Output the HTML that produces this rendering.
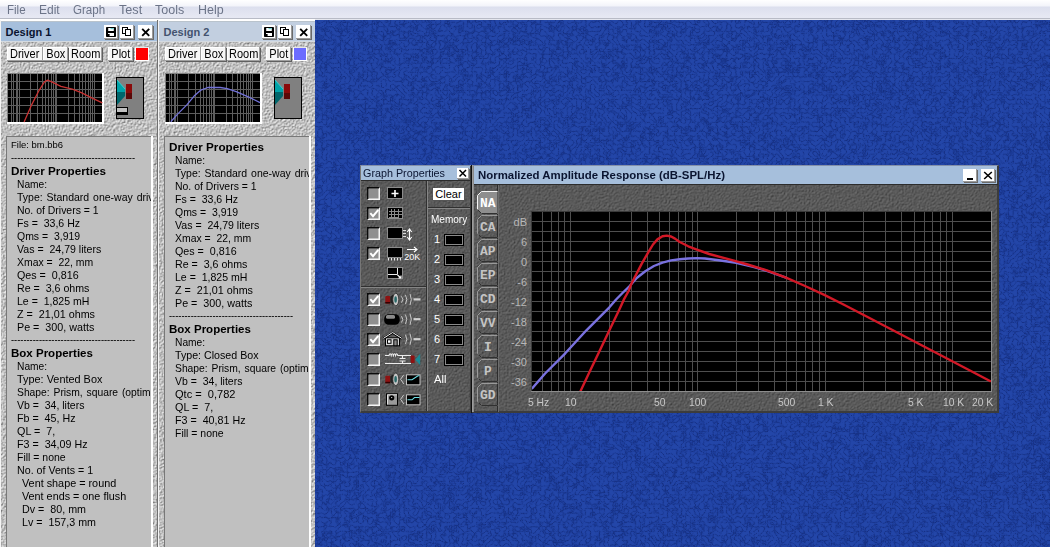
<!DOCTYPE html>
<html><head><meta charset="utf-8"><title>BassBox</title>
<style>
*{box-sizing:border-box;margin:0;padding:0}
html,body{width:1050px;height:547px;overflow:hidden;background:#1f3f9c;font-family:"Liberation Sans",sans-serif;}
.abs{position:absolute}
#root{position:absolute;left:0;top:0;width:1050px;height:547px;overflow:hidden}
.menu{position:absolute;left:0;top:0;width:1050px;height:18px;background:linear-gradient(#ffffff 0px,#f3f4fa 6px,#dcdfee 7px,#e6e8f3 17px)}
.menu span{position:absolute;top:2px;font-size:12px;line-height:16px;color:#6c7488;white-space:nowrap;transform-origin:0 0}
.tb{position:absolute;height:19px;font-weight:bold;font-size:11px;line-height:19px;white-space:nowrap;overflow:hidden}
.tb span{position:absolute;transform-origin:0 0}
.btn{position:absolute;background:#fff;border-right:1px solid #808080;border-bottom:1px solid #808080;font-size:11px;color:#000;text-align:center;white-space:nowrap}
.btn2{position:absolute;background:#fff;box-shadow:inset -1px -1px 0 #9a9a9a, 1px 1px 0 #6a6a6a}
.txt{position:absolute;background:#c0c0c0;overflow:hidden}
.ln{position:absolute;height:13px;line-height:13px;font-size:11px;color:#000;white-space:pre;transform-origin:0 0;}
.b{font-weight:bold;font-size:11.5px}
.s{font-size:9.33px}
.w{color:#fff}
</style></head><body><div id="root">

<svg class="abs" style="left:0;top:0" width="1050" height="547">
<defs>
<filter id="fblue" x="0" y="0" width="100%" height="100%" color-interpolation-filters="sRGB">
<feTurbulence type="turbulence" baseFrequency="0.22" numOctaves="2" seed="7"/>
<feColorMatrix type="matrix" values="1 0 0 0 0  1 0 0 0 0  1 0 0 0 0  0 0 0 0 1"/>
<feComponentTransfer>
<feFuncR type="table" tableValues="0.085 0.105 0.125 0.135 0.14 0.14 0.14 0.14 0.14 0.14"/>
<feFuncG type="table" tableValues="0.185 0.225 0.255 0.27 0.275 0.275 0.275 0.275 0.275 0.275"/>
<feFuncB type="table" tableValues="0.51 0.58 0.63 0.655 0.66 0.66 0.66 0.66 0.66 0.66"/>
</feComponentTransfer>
</filter>
<filter id="fgrey" x="0" y="0" width="100%" height="100%" color-interpolation-filters="sRGB">
<feTurbulence type="fractalNoise" baseFrequency="0.7" numOctaves="2" seed="11" result="n"/>
<feDiffuseLighting in="n" surfaceScale="1.1" diffuseConstant="1" lighting-color="#ffffff"><feDistantLight azimuth="225" elevation="49"/></feDiffuseLighting>
</filter>
<filter id="fdark" x="0" y="0" width="100%" height="100%" color-interpolation-filters="sRGB">
<feTurbulence type="fractalNoise" baseFrequency="0.6" numOctaves="2" seed="5" result="n"/>
<feDiffuseLighting in="n" surfaceScale="0.8" diffuseConstant="1" lighting-color="#757575"><feDistantLight azimuth="225" elevation="50"/></feDiffuseLighting>
</filter>
</defs>
<rect x="0" y="0" width="1050" height="547" fill="#1f3f9c"/>
<rect x="315" y="20" width="735" height="527" filter="url(#fblue)"/>
<rect x="0" y="19" width="315" height="528" filter="url(#fgrey)"/>
<rect x="360" y="165" width="639" height="248" filter="url(#fdark)"/>
</svg>

<div class="menu">
<span style="left:7.0px;transform:scaleX(0.9616)">File</span>
<span style="left:38.9px;transform:scaleX(1.0006)">Edit</span>
<span style="left:72.7px;transform:scaleX(0.9652)">Graph</span>
<span style="left:118.7px;transform:scaleX(1.0538)">Test</span>
<span style="left:155.4px;transform:scaleX(1.0423)">Tools</span>
<span style="left:197.7px;transform:scaleX(1.037)">Help</span>
</div>
<div class="abs" style="left:0;top:18px;width:1050px;height:1px;background:#b8bbc6"></div>
<div class="abs" style="left:0;top:19px;width:315px;height:2px;background:#fff"></div>
<div class="abs" style="left:315px;top:19px;width:735px;height:1px;background:#e4e6ee"></div>
<div class="abs" style="left:1px;top:21px;width:156px;height:1px;background:#b9c3cc"></div>
<div class="abs" style="left:1px;top:41px;width:156px;height:1px;background:#d4dae0"></div>
<div class="abs" style="left:0px;top:20px;width:1px;height:527px;background:#f4f4f4"></div>
<div class="tb" style="left:1px;top:22px;width:156px;background:#a6bfdc;color:#0a1430"><span style="left:4.5px;top:1px">Design 1</span></div>
<div class="btn2" style="left:104px;top:25px;width:14px;height:14px"><svg width="14" height="14" style="display:block"><rect x="2" y="2" width="10" height="10" rx="0.8" fill="#000"/><rect x="4.2" y="3" width="5.6" height="3" fill="#fff"/><rect x="6.5" y="3" width="3.3" height="1.2" fill="#6fd0d0"/><rect x="4" y="8" width="6" height="3" fill="#fff"/><rect x="4" y="9" width="1.6" height="2" fill="#000"/></svg></div>
<div class="btn2" style="left:120px;top:25px;width:14px;height:14px"><svg width="14" height="14" style="display:block"><rect x="2.5" y="2.5" width="5" height="6" fill="#fff" stroke="#000"/><rect x="5.5" y="4.5" width="5" height="6" fill="#fff" stroke="#000"/></svg></div>
<div class="btn2" style="left:138px;top:25px;width:15px;height:14px"><svg width="15" height="14" style="display:block"><path d="M4.2 3.8L11.2 10.8M11.2 3.8L4.2 10.8" stroke="#000" stroke-width="1.9" fill="none"/></svg></div>
<div class="btn" style="left:7px;top:47px;width:35.5px;height:14px;line-height:14px;font-size:12.5px;background:#f6f6f6;border-color:#a0a0a0;box-shadow:inset 1px 1px 0 #fff, 1px 1px 0 #606060"><span style="display:inline-block;transform:scaleX(0.88);margin-left:0px">Driver</span></div>
<div class="btn" style="left:43px;top:47px;width:25px;height:14px;line-height:14px;font-size:12.5px;background:#f6f6f6;border-color:#a0a0a0;box-shadow:inset 1px 1px 0 #fff, 1px 1px 0 #606060"><span style="display:inline-block;transform:scaleX(0.88);margin-left:2px">Box</span></div>
<div class="btn" style="left:68.5px;top:47px;width:33.5px;height:14px;line-height:14px;font-size:12.5px;background:#f6f6f6;border-color:#a0a0a0;box-shadow:inset 1px 1px 0 #fff, 1px 1px 0 #606060"><span style="display:inline-block;transform:scaleX(0.88);margin-left:0px">Room</span></div>
<div class="btn" style="left:108px;top:47px;width:25px;height:14px;line-height:14px;font-size:12.5px;background:#f6f6f6;border-color:#a0a0a0;box-shadow:inset 1px 1px 0 #fff, 1px 1px 0 #606060"><span style="display:inline-block;transform:scaleX(0.88);margin-left:2px">Plot</span></div>
<div class="abs" style="left:134.5px;top:47px;width:14.5px;height:14px;background:#ff0000;border:1px solid #fff;border-top-color:#e8e8e8"></div>
<svg class="abs" style="left:7px;top:73px" width="97" height="51">
<rect x="0" y="0" width="97" height="51" fill="#fff"/>
<rect x="0" y="0" width="95" height="49" fill="#808080"/>
<rect x="1" y="1" width="94" height="48" fill="#000"/>
<path d="M4.5 1V49 M6.5 1V49 M9.5 1V49 M10.5 1V49 M12.5 1V49 M23.5 1V49 M30.5 1V49 M35.5 1V49 M38.5 1V49 M41.5 1V49 M44.5 1V49 M46.5 1V49 M48.5 1V49 M49.5 1V49 M61.5 1V49 M67.5 1V49 M72.5 1V49 M75.5 1V49 M78.5 1V49 M81.5 1V49 M83.5 1V49 M85.5 1V49 M87.5 1V49 M1 8.5H95 M1 16.5H95 M1 24.5H95 M1 32.5H95 M1 40.5H95" stroke="#5e5e5e" stroke-width="1" fill="none" shape-rendering="crispEdges"/>
<polyline points="17.1,49.1 24.5,32.1 32.4,16.8 37.5,8.9 40.3,7.2 43.7,8.3 53.9,13.4 65.3,16.2 74.3,19.6 85.7,25.3 95.3,29.8" fill="none" stroke="#c83232" stroke-width="1.3" stroke-linejoin="round"/>
</svg>
<svg class="abs" style="left:116px;top:77px" width="28" height="42">
<rect x="0.5" y="0.5" width="27" height="41" fill="#808080" stroke="#000" stroke-width="1"/>
<polygon points="1,3 9,12 9,19 1,28" fill="#00666c"/>
<polygon points="1,3 9,12 9,15 1,15" fill="#00a2a8"/>
<path d="M1 3L9 12" stroke="#40e0e0" stroke-width="0.8"/>
<rect x="10" y="7" width="6" height="15" fill="#8a0a0a"/>
<rect x="10" y="16" width="6" height="6" fill="#5a0808"/>
<rect x="1" y="30" width="11" height="8" fill="#000"/>
<rect x="1" y="31" width="10" height="4" fill="#c0c0c0"/>
</svg>
<div class="abs" style="left:151px;top:136px;width:2px;height:411px;background:#fff"></div>
<div class="abs" style="left:6px;top:136px;width:145px;height:411px;background:#787878"></div>
<div class="txt" style="left:7px;top:137px;width:144px;height:410px">
<div class="ln s" style="top:2px;left:4.0px;transform:scaleX(1.015)">File: bm.bb6</div>
<div class="ln " style="top:14px;left:4.0px;transform:scaleX(0.8462)">----------------------------------------</div>
<div class="ln b" style="top:28px;left:4.0px;transform:scaleX(1.0168)">Driver Properties</div>
<div class="ln " style="top:41px;left:9.7px;transform:scaleX(0.9288)">Name:</div>
<div class="ln " style="top:54px;left:9.7px;transform:scaleX(0.955);word-spacing:1px">Type: Standard one-way driver</div>
<div class="ln " style="top:67px;left:9.7px;transform:scaleX(0.95)">No. of Drivers = 1</div>
<div class="ln " style="top:80px;left:9.7px;transform:scaleX(0.9599)">Fs =  33,6 Hz</div>
<div class="ln " style="top:93px;left:9.7px;transform:scaleX(0.9511)">Qms =  3,919</div>
<div class="ln " style="top:106px;left:9.7px;transform:scaleX(0.9618)">Vas =  24,79 liters</div>
<div class="ln " style="top:119px;left:9.7px;transform:scaleX(0.9479)">Xmax =  22, mm</div>
<div class="ln " style="top:132px;left:9.7px;transform:scaleX(0.9732)">Qes =  0,816</div>
<div class="ln " style="top:145px;left:9.7px;transform:scaleX(0.9665)">Re =  3,6 ohms</div>
<div class="ln " style="top:158px;left:9.7px;transform:scaleX(0.9585)">Le =  1,825 mH</div>
<div class="ln " style="top:171px;left:9.7px;transform:scaleX(0.9775)">Z =  21,01 ohms</div>
<div class="ln " style="top:184px;left:9.7px;transform:scaleX(0.9762)">Pe =  300, watts</div>
<div class="ln " style="top:196px;left:4.0px;transform:scaleX(0.8462)">----------------------------------------</div>
<div class="ln b" style="top:209.5px;left:4.0px;transform:scaleX(1.0011)">Box Properties</div>
<div class="ln " style="top:223px;left:9.7px;transform:scaleX(0.9288)">Name:</div>
<div class="ln " style="top:236px;left:9.7px;transform:scaleX(0.9903)">Type: Vented Box</div>
<div class="ln " style="top:249px;left:9.7px;transform:scaleX(0.938);word-spacing:1px">Shape: Prism, square (optimum)</div>
<div class="ln " style="top:262px;left:9.7px;transform:scaleX(0.9543)">Vb =  34, liters</div>
<div class="ln " style="top:275px;left:9.7px;transform:scaleX(0.9712)">Fb =  45, Hz</div>
<div class="ln " style="top:288px;left:9.7px;transform:scaleX(0.9809)">QL =  7,</div>
<div class="ln " style="top:301px;left:9.7px;transform:scaleX(0.9728)">F3 =  34,09 Hz</div>
<div class="ln " style="top:314px;left:9.7px;transform:scaleX(0.9518)">Fill = none</div>
<div class="ln " style="top:327px;left:9.7px;transform:scaleX(0.9695)">No. of Vents = 1</div>
<div class="ln " style="top:340px;left:15.0px;transform:scaleX(0.9841)">Vent shape = round</div>
<div class="ln " style="top:353px;left:15.0px;transform:scaleX(0.9819)">Vent ends = one flush</div>
<div class="ln " style="top:366px;left:15.0px;transform:scaleX(0.9738)">Dv =  80, mm</div>
<div class="ln " style="top:379px;left:15.0px;transform:scaleX(0.9721)">Lv =  157,3 mm</div>
</div>
<div class="abs" style="left:157px;top:20px;width:1px;height:527px;background:#707070"></div>
<div class="abs" style="left:159px;top:21px;width:156px;height:1px;background:#b9c3cc"></div>
<div class="abs" style="left:159px;top:41px;width:156px;height:1px;background:#d4dae0"></div>
<div class="abs" style="left:158px;top:20px;width:1px;height:527px;background:#f4f4f4"></div>
<div class="tb" style="left:159px;top:22px;width:156px;background:#c2cfe0;color:#43536f"><span style="left:4.5px;top:1px">Design 2</span></div>
<div class="btn2" style="left:262px;top:25px;width:14px;height:14px"><svg width="14" height="14" style="display:block"><rect x="2" y="2" width="10" height="10" rx="0.8" fill="#000"/><rect x="4.2" y="3" width="5.6" height="3" fill="#fff"/><rect x="6.5" y="3" width="3.3" height="1.2" fill="#6fd0d0"/><rect x="4" y="8" width="6" height="3" fill="#fff"/><rect x="4" y="9" width="1.6" height="2" fill="#000"/></svg></div>
<div class="btn2" style="left:278px;top:25px;width:14px;height:14px"><svg width="14" height="14" style="display:block"><rect x="2.5" y="2.5" width="5" height="6" fill="#fff" stroke="#000"/><rect x="5.5" y="4.5" width="5" height="6" fill="#fff" stroke="#000"/></svg></div>
<div class="btn2" style="left:296px;top:25px;width:15px;height:14px"><svg width="15" height="14" style="display:block"><path d="M4.2 3.8L11.2 10.8M11.2 3.8L4.2 10.8" stroke="#000" stroke-width="1.9" fill="none"/></svg></div>
<div class="btn" style="left:165px;top:47px;width:35.5px;height:14px;line-height:14px;font-size:12.5px;background:#f6f6f6;border-color:#a0a0a0;box-shadow:inset 1px 1px 0 #fff, 1px 1px 0 #606060"><span style="display:inline-block;transform:scaleX(0.88);margin-left:0px">Driver</span></div>
<div class="btn" style="left:201px;top:47px;width:25px;height:14px;line-height:14px;font-size:12.5px;background:#f6f6f6;border-color:#a0a0a0;box-shadow:inset 1px 1px 0 #fff, 1px 1px 0 #606060"><span style="display:inline-block;transform:scaleX(0.88);margin-left:2px">Box</span></div>
<div class="btn" style="left:226.5px;top:47px;width:33.5px;height:14px;line-height:14px;font-size:12.5px;background:#f6f6f6;border-color:#a0a0a0;box-shadow:inset 1px 1px 0 #fff, 1px 1px 0 #606060"><span style="display:inline-block;transform:scaleX(0.88);margin-left:0px">Room</span></div>
<div class="btn" style="left:266px;top:47px;width:25px;height:14px;line-height:14px;font-size:12.5px;background:#f6f6f6;border-color:#a0a0a0;box-shadow:inset 1px 1px 0 #fff, 1px 1px 0 #606060"><span style="display:inline-block;transform:scaleX(0.88);margin-left:2px">Plot</span></div>
<div class="abs" style="left:292.5px;top:47px;width:14.5px;height:14px;background:#6c6cff;border:1px solid #fff;border-top-color:#e8e8e8"></div>
<svg class="abs" style="left:165px;top:73px" width="97" height="51">
<rect x="0" y="0" width="97" height="51" fill="#fff"/>
<rect x="0" y="0" width="95" height="49" fill="#808080"/>
<rect x="1" y="1" width="94" height="48" fill="#000"/>
<path d="M4.5 1V49 M6.5 1V49 M9.5 1V49 M10.5 1V49 M12.5 1V49 M23.5 1V49 M30.5 1V49 M35.5 1V49 M38.5 1V49 M41.5 1V49 M44.5 1V49 M46.5 1V49 M48.5 1V49 M49.5 1V49 M61.5 1V49 M67.5 1V49 M72.5 1V49 M75.5 1V49 M78.5 1V49 M81.5 1V49 M83.5 1V49 M85.5 1V49 M87.5 1V49 M1 8.5H95 M1 16.5H95 M1 24.5H95 M1 32.5H95 M1 40.5H95" stroke="#5e5e5e" stroke-width="1" fill="none" shape-rendering="crispEdges"/>
<polyline points="5.8,48.7 12.6,41.1 21.6,32.1 29.1,23.1 35.9,17.1 42.7,14.5 55.4,14.5 62.2,15.6 71.2,18.6 83.3,23.8 95.0,29.6" fill="none" stroke="#7272d8" stroke-width="1.3" stroke-linejoin="round"/>
</svg>
<svg class="abs" style="left:274px;top:77px" width="28" height="42">
<rect x="0.5" y="0.5" width="27" height="41" fill="#808080" stroke="#000" stroke-width="1"/>
<polygon points="1,3 9,12 9,19 1,28" fill="#00666c"/>
<polygon points="1,3 9,12 9,15 1,15" fill="#00a2a8"/>
<path d="M1 3L9 12" stroke="#40e0e0" stroke-width="0.8"/>
<rect x="10" y="7" width="6" height="15" fill="#8a0a0a"/>
<rect x="10" y="16" width="6" height="6" fill="#5a0808"/>
</svg>
<div class="abs" style="left:309px;top:136px;width:2px;height:411px;background:#fff"></div>
<div class="abs" style="left:164px;top:136px;width:145px;height:411px;background:#787878"></div>
<div class="txt" style="left:165px;top:137px;width:144px;height:410px">
<div class="ln b" style="top:4px;left:4.0px;transform:scaleX(1.0168)">Driver Properties</div>
<div class="ln " style="top:17px;left:9.699999999999989px;transform:scaleX(0.9288)">Name:</div>
<div class="ln " style="top:30px;left:9.699999999999989px;transform:scaleX(0.955);word-spacing:1px">Type: Standard one-way driver</div>
<div class="ln " style="top:43px;left:9.699999999999989px;transform:scaleX(0.95)">No. of Drivers = 1</div>
<div class="ln " style="top:56px;left:9.699999999999989px;transform:scaleX(0.9599)">Fs =  33,6 Hz</div>
<div class="ln " style="top:69px;left:9.699999999999989px;transform:scaleX(0.9511)">Qms =  3,919</div>
<div class="ln " style="top:82px;left:9.699999999999989px;transform:scaleX(0.9618)">Vas =  24,79 liters</div>
<div class="ln " style="top:95px;left:9.699999999999989px;transform:scaleX(0.9479)">Xmax =  22, mm</div>
<div class="ln " style="top:108px;left:9.699999999999989px;transform:scaleX(0.9732)">Qes =  0,816</div>
<div class="ln " style="top:121px;left:9.699999999999989px;transform:scaleX(0.9665)">Re =  3,6 ohms</div>
<div class="ln " style="top:134px;left:9.699999999999989px;transform:scaleX(0.9585)">Le =  1,825 mH</div>
<div class="ln " style="top:147px;left:9.699999999999989px;transform:scaleX(0.9775)">Z =  21,01 ohms</div>
<div class="ln " style="top:160px;left:9.699999999999989px;transform:scaleX(0.9762)">Pe =  300, watts</div>
<div class="ln " style="top:172px;left:4.0px;transform:scaleX(0.8462)">----------------------------------------</div>
<div class="ln b" style="top:185.5px;left:4.0px;transform:scaleX(1.0011)">Box Properties</div>
<div class="ln " style="top:199px;left:9.699999999999989px;transform:scaleX(0.9288)">Name:</div>
<div class="ln " style="top:212px;left:9.699999999999989px;transform:scaleX(0.9685)">Type: Closed Box</div>
<div class="ln " style="top:225px;left:9.699999999999989px;transform:scaleX(0.938);word-spacing:1px">Shape: Prism, square (optimum)</div>
<div class="ln " style="top:238px;left:9.699999999999989px;transform:scaleX(0.9543)">Vb =  34, liters</div>
<div class="ln " style="top:251px;left:9.699999999999989px;transform:scaleX(1.0044)">Qtc =  0,782</div>
<div class="ln " style="top:264px;left:9.699999999999989px;transform:scaleX(0.9809)">QL =  7,</div>
<div class="ln " style="top:277px;left:9.699999999999989px;transform:scaleX(0.9728)">F3 =  40,81 Hz</div>
<div class="ln " style="top:290px;left:9.699999999999989px;transform:scaleX(0.9518)">Fill = none</div>
</div>
<div class="abs" style="left:360px;top:165px;width:639px;height:248px;border:1px solid #3c3c3c;border-left-color:#777;border-top-color:#8490a8;border-right-width:2px;border-bottom-width:2px"></div>
<div class="tb" style="left:361px;top:166px;width:109px;height:14px;line-height:15px;background:#a6bfdc;color:#0a1430;font-weight:normal"><span style="left:2px;top:0;transform:scaleX(0.9789)">Graph Properties</span></div>
<div class="btn2" style="left:457px;top:168px;width:12px;height:11px"><svg width="12" height="11" style="display:block"><path d="M2.5 2L9 8.5M9 2L2.5 8.5" stroke="#000" stroke-width="1.5"/></svg></div>
<div class="abs" style="left:361px;top:180px;width:109px;height:1px;background:#2c2c2c"></div>
<div class="abs" style="left:426px;top:181px;width:1px;height:230px;background:#303030"></div>
<div class="abs" style="left:427px;top:181px;width:1px;height:230px;background:#858585"></div>
<div class="abs" style="left:361px;top:286px;width:65px;height:1px;background:#303030"></div>
<div class="abs" style="left:361px;top:287px;width:65px;height:1px;background:#858585"></div>
<div class="abs" style="left:428px;top:207px;width:42px;height:1px;background:#303030"></div>
<div class="abs" style="left:428px;top:208px;width:42px;height:1px;background:#858585"></div>
<div class="abs" style="left:470px;top:166px;width:1px;height:246px;background:#3a3a3a"></div>
<div class="abs" style="left:471px;top:165px;width:1px;height:248px;background:#101010"></div>
<div class="abs" style="left:472px;top:165px;width:1px;height:247px;background:#9c9c9c"></div>
<div class="abs" style="left:473px;top:166px;width:1px;height:246px;background:#8a8a8a"></div>
<div class="btn" style="left:433px;top:188px;width:32px;height:13px;line-height:13px;border-color:#555">Clear</div>
<div class="ln w" style="left:431px;top:213px;transform:scaleX(0.911)">Memory</div>
<svg class="abs" style="left:367px;top:187px" width="13" height="13"><rect x="0" y="0" width="13" height="13" fill="#f4f4f4"/><path d="M0 0H13L11.5 1.7H1.7V11.5L0 13Z" fill="#0a0a0a"/><rect x="1.7" y="1.7" width="9.8" height="9.8" fill="#8f8f8f"/></svg>
<svg class="abs" style="left:367px;top:207px" width="13" height="13"><rect x="0" y="0" width="13" height="13" fill="#f4f4f4"/><path d="M0 0H13L11.5 1.7H1.7V11.5L0 13Z" fill="#0a0a0a"/><rect x="1.7" y="1.7" width="9.8" height="9.8" fill="#8f8f8f"/><path d="M3.3 6.2L6 9.2L11.3 2.8" stroke="#fff" stroke-width="2" fill="none"/></svg>
<svg class="abs" style="left:367px;top:227px" width="13" height="13"><rect x="0" y="0" width="13" height="13" fill="#f4f4f4"/><path d="M0 0H13L11.5 1.7H1.7V11.5L0 13Z" fill="#0a0a0a"/><rect x="1.7" y="1.7" width="9.8" height="9.8" fill="#8f8f8f"/></svg>
<svg class="abs" style="left:367px;top:247px" width="13" height="13"><rect x="0" y="0" width="13" height="13" fill="#f4f4f4"/><path d="M0 0H13L11.5 1.7H1.7V11.5L0 13Z" fill="#0a0a0a"/><rect x="1.7" y="1.7" width="9.8" height="9.8" fill="#8f8f8f"/><path d="M3.3 6.2L6 9.2L11.3 2.8" stroke="#fff" stroke-width="2" fill="none"/></svg>
<svg class="abs" style="left:367px;top:293px" width="13" height="13"><rect x="0" y="0" width="13" height="13" fill="#f4f4f4"/><path d="M0 0H13L11.5 1.7H1.7V11.5L0 13Z" fill="#0a0a0a"/><rect x="1.7" y="1.7" width="9.8" height="9.8" fill="#8f8f8f"/><path d="M3.3 6.2L6 9.2L11.3 2.8" stroke="#fff" stroke-width="2" fill="none"/></svg>
<svg class="abs" style="left:367px;top:313px" width="13" height="13"><rect x="0" y="0" width="13" height="13" fill="#f4f4f4"/><path d="M0 0H13L11.5 1.7H1.7V11.5L0 13Z" fill="#0a0a0a"/><rect x="1.7" y="1.7" width="9.8" height="9.8" fill="#8f8f8f"/></svg>
<svg class="abs" style="left:367px;top:333px" width="13" height="13"><rect x="0" y="0" width="13" height="13" fill="#f4f4f4"/><path d="M0 0H13L11.5 1.7H1.7V11.5L0 13Z" fill="#0a0a0a"/><rect x="1.7" y="1.7" width="9.8" height="9.8" fill="#8f8f8f"/><path d="M3.3 6.2L6 9.2L11.3 2.8" stroke="#fff" stroke-width="2" fill="none"/></svg>
<svg class="abs" style="left:367px;top:353px" width="13" height="13"><rect x="0" y="0" width="13" height="13" fill="#f4f4f4"/><path d="M0 0H13L11.5 1.7H1.7V11.5L0 13Z" fill="#0a0a0a"/><rect x="1.7" y="1.7" width="9.8" height="9.8" fill="#8f8f8f"/></svg>
<svg class="abs" style="left:367px;top:373px" width="13" height="13"><rect x="0" y="0" width="13" height="13" fill="#f4f4f4"/><path d="M0 0H13L11.5 1.7H1.7V11.5L0 13Z" fill="#0a0a0a"/><rect x="1.7" y="1.7" width="9.8" height="9.8" fill="#8f8f8f"/></svg>
<svg class="abs" style="left:367px;top:393px" width="13" height="13"><rect x="0" y="0" width="13" height="13" fill="#f4f4f4"/><path d="M0 0H13L11.5 1.7H1.7V11.5L0 13Z" fill="#0a0a0a"/><rect x="1.7" y="1.7" width="9.8" height="9.8" fill="#8f8f8f"/></svg>
<svg class="abs" style="left:384px;top:184px" width="42" height="100">
<rect x="3.5" y="3.5" width="15" height="11" fill="#000" stroke="#8c8c8c" stroke-width="1"/><path d="M7.5 9.5H14.5M11 6V13" stroke="#fff" stroke-width="1.6"/>
<rect x="3.5" y="23.5" width="15" height="11" fill="#000" stroke="#8c8c8c" stroke-width="1"/><path d="M5 27.5H18M5 30.5H18M5 33.5H14M7.5 25V35M10.5 25V35M14.5 25V35" stroke="#8c8c8c" stroke-width="1"/>
<rect x="3.5" y="43.5" width="15" height="11" fill="#000" stroke="#8c8c8c" stroke-width="1"/><path d="M19 46.5H22M19 49.5H22M19 52.5H22" stroke="#ddd" stroke-width="1"/><path d="M25.5 45.5V55.5M23.3 48L25.5 45L27.7 48M23.3 53L25.5 56L27.7 53" stroke="#fff" stroke-width="1.1" fill="none"/>
<rect x="3.5" y="63.5" width="15" height="10" fill="#000" stroke="#8c8c8c" stroke-width="1"/><path d="M4.5 74V76.5M7.5 74V76.5M10.5 74V76.5M13.5 74V76.5M16.5 74V76.5" stroke="#e8e8e8" stroke-width="1"/><path d="M23 65.5H33M30 63L33 65.5L30 68" stroke="#fff" stroke-width="1.1" fill="none"/>
<text x="20.3" y="76.3" font-family="Liberation Sans, sans-serif" font-size="9" fill="#fff" textLength="16" lengthAdjust="spacingAndGlyphs">20K</text>
<rect x="3.5" y="83.5" width="15" height="11" fill="#000" stroke="#8c8c8c" stroke-width="1"/><path d="M4 90.5H13.5V84" stroke="#e8e8e8" stroke-width="1" fill="none"/><path d="M13.5 91L17 94M17 94H14.5M17 94V91.5" stroke="#fff" stroke-width="1.1" fill="none"/>
</svg>
<svg class="abs" style="left:383px;top:289px" width="42" height="122">
<rect x="2.3" y="7.0" width="5" height="7.5" rx="1" fill="#8e1212"/><rect x="2.3" y="13.0" width="5" height="1.5" fill="#300"/><path d="M7.3 7.5L10.3 5.5V15.5L7.3 13.5Z" fill="#222"/><ellipse cx="12.8" cy="10.5" rx="3" ry="6.3" fill="#c4c4c4" stroke="#2a2a2a" stroke-width="0.8"/><ellipse cx="12.600000000000001" cy="10.5" rx="1.3" ry="3.2" fill="#2a6a6a"/><path d="M18.5 7.3Q21.1 10.5 18.5 13.7M22.5 5.9Q25.1 10.5 22.5 15.1M27.0 4.9Q29.6 10.5 27.0 16.1" stroke="#c8c8c8" stroke-width="1" fill="none"/><rect x="30.5" y="9.3" width="7" height="2.2" fill="#d0d0d0"/>
<rect x="1.2" y="25.3" width="15.5" height="10.4" rx="4.5" fill="#000"/><rect x="3" y="26.1" width="9" height="3.6" rx="1.5" fill="#8a8a8a"/><path d="M18.5 27.1Q21.1 30.3 18.5 33.5M22.5 25.700000000000003Q25.1 30.3 22.5 34.9M27.0 24.700000000000003Q29.6 30.3 27.0 35.9" stroke="#c8c8c8" stroke-width="1" fill="none"/><rect x="30.5" y="29.1" width="7" height="2.2" fill="#d0d0d0"/>
<rect x="2.5" y="48.8" width="14" height="8" fill="#d4d4d4" stroke="#000" stroke-width="1"/><path d="M0.5 49.5L9.6 43.699999999999996L18.7 49.5" stroke="#000" stroke-width="2.2" fill="none"/><path d="M0.5 49.3L9.6 43.5L18.7 49.3" stroke="#f4f4f4" stroke-width="1" fill="none"/><rect x="4.5" y="50.8" width="3.5" height="3.5" fill="#fff" stroke="#000" stroke-width="1"/><rect x="10.8" y="50.8" width="3.4" height="6" fill="#888" stroke="#000" stroke-width="1"/><path d="M22.5 45.699999999999996Q25.1 50.3 22.5 54.9M27.0 44.699999999999996Q29.6 50.3 27.0 55.9" stroke="#c8c8c8" stroke-width="1" fill="none"/><rect x="30.5" y="49.099999999999994" width="7" height="2.2" fill="#d0d0d0"/>
<path d="M2 66.5H6q1.1 -3.6 2.2 0q1.1 -3.6 2.2 0q1.1 -3.6 2.2 0q1.1 -3.6 2.2 0H28M2 74.5H28M19.5 66.5V69.5M16.5 69.5H22.5M16.5 72.0H22.5M19.5 72.5V74.5" stroke="#ececec" stroke-width="1.1" fill="none"/><rect x="27.6" y="66.5" width="4" height="7.6" rx="0.8" fill="#8e1212"/><path d="M32.4 70.5L37.2 64.7V76.3Z" fill="#1a8a96"/>
<rect x="2.3" y="86.8" width="5" height="7.5" rx="1" fill="#8e1212"/><rect x="2.3" y="92.8" width="5" height="1.5" fill="#300"/><path d="M7.3 87.3L10.3 85.3V95.3L7.3 93.3Z" fill="#222"/><ellipse cx="12.8" cy="90.3" rx="3" ry="6.3" fill="#c4c4c4" stroke="#2a2a2a" stroke-width="0.8"/><ellipse cx="12.600000000000001" cy="90.3" rx="1.3" ry="3.2" fill="#2a6a6a"/><path d="M20.8 85.7L17.6 90.3L20.8 94.89999999999999" stroke="#c8c8c8" stroke-width="1" fill="none"/><rect x="23.5" y="85.8" width="13.5" height="10" fill="#000" stroke="#c0c0c0" stroke-width="1"/><path d="M24.5 90.8H29L35 86.8H36.5" stroke="#6fe0e6" stroke-width="1.1" fill="none"/>
<rect x="3.5" y="104.8" width="11" height="11.5" fill="#9a9a9a" stroke="#000" stroke-width="1"/><path d="M4.5 115.3V105.8H14" stroke="#e0e0e0" stroke-width="1" fill="none"/><circle cx="8.7" cy="108.8" r="2.6" fill="#000"/><rect x="8.2" y="108.1" width="1" height="1" fill="#fff"/><path d="M20.8 105.7L17.6 110.3L20.8 114.89999999999999" stroke="#c8c8c8" stroke-width="1" fill="none"/><rect x="23.5" y="105.8" width="13.5" height="10" fill="#000" stroke="#c0c0c0" stroke-width="1"/><path d="M24.5 110.8H29L31.5 108.5H36.5" stroke="#6fe0e6" stroke-width="1.1" fill="none"/>
</svg>
<div class="ln w" style="left:434px;top:233px">1</div>
<div class="abs" style="left:444px;top:234px;width:20px;height:12px;background:#000;box-shadow:inset 0 0 0 1px #000, inset 0 0 0 2px #8a8a8a"></div>
<div class="ln w" style="left:434px;top:253px">2</div>
<div class="abs" style="left:444px;top:254px;width:20px;height:12px;background:#000;box-shadow:inset 0 0 0 1px #000, inset 0 0 0 2px #8a8a8a"></div>
<div class="ln w" style="left:434px;top:273px">3</div>
<div class="abs" style="left:444px;top:274px;width:20px;height:12px;background:#000;box-shadow:inset 0 0 0 1px #000, inset 0 0 0 2px #8a8a8a"></div>
<div class="ln w" style="left:434px;top:293px">4</div>
<div class="abs" style="left:444px;top:294px;width:20px;height:12px;background:#000;box-shadow:inset 0 0 0 1px #000, inset 0 0 0 2px #8a8a8a"></div>
<div class="ln w" style="left:434px;top:313px">5</div>
<div class="abs" style="left:444px;top:314px;width:20px;height:12px;background:#000;box-shadow:inset 0 0 0 1px #000, inset 0 0 0 2px #8a8a8a"></div>
<div class="ln w" style="left:434px;top:333px">6</div>
<div class="abs" style="left:444px;top:334px;width:20px;height:12px;background:#000;box-shadow:inset 0 0 0 1px #000, inset 0 0 0 2px #8a8a8a"></div>
<div class="ln w" style="left:434px;top:353px">7</div>
<div class="abs" style="left:444px;top:354px;width:20px;height:12px;background:#000;box-shadow:inset 0 0 0 1px #000, inset 0 0 0 2px #8a8a8a"></div>
<div class="ln w" style="left:433.5px;top:373px;transform:scaleX(1.0135)">All</div>
<div class="tb" style="left:474px;top:166px;width:523px;height:18px;line-height:19px;background:#a6bfdc;color:#0a1430"><span style="left:4px;top:0;transform:scaleX(1.038)">Normalized Amplitude Response (dB-SPL/Hz)</span></div>
<div class="abs" style="left:474px;top:184px;width:524px;height:1px;background:#2c2c2c"></div>
<div class="btn2" style="left:963px;top:169px;width:14px;height:13px"><div class="abs" style="left:4px;top:8.5px;width:6px;height:2px;background:#000"></div></div>
<div class="btn2" style="left:981px;top:169px;width:14px;height:13px"><svg width="14" height="13" style="display:block"><path d="M3.2 3L10.8 10M10.8 3L3.2 10" stroke="#000" stroke-width="1.6"/></svg></div>
<div class="abs" style="left:497px;top:185px;width:1px;height:227px;background:#2c2c2c"></div>
<div class="abs" style="left:498px;top:185px;width:1px;height:227px;background:#6c6c6c"></div>
<svg class="abs" style="left:476px;top:190px" width="22" height="220">
<path d="M21.5 1.5H5.5L1.5 5.5V19.5L5.5 23.5H21.5" fill="#8e8e8e" stroke="#f4f4f4" stroke-width="1"/>
<path d="M1.5 19.5L5.5 23.5H21.5" fill="none" stroke="#303030" stroke-width="1"/>
<text x="11.8" y="17" text-anchor="middle" font-family="Liberation Mono, monospace" font-weight="bold" font-size="13" fill="#fff">NA</text>
<path d="M21.5 25.5H5.5L1.5 29.5V43.5L5.5 47.5H21.5" fill="none" stroke="#9a9a9a" stroke-width="1"/>
<path d="M2.5 44.5L5.5 47.5H21.5" fill="none" stroke="#303030" stroke-width="1"/>
<text x="11.8" y="41" text-anchor="middle" font-family="Liberation Mono, monospace" font-weight="bold" font-size="13" fill="#c4c4c4">CA</text>
<path d="M21.5 49.5H5.5L1.5 53.5V67.5L5.5 71.5H21.5" fill="none" stroke="#9a9a9a" stroke-width="1"/>
<path d="M2.5 68.5L5.5 71.5H21.5" fill="none" stroke="#303030" stroke-width="1"/>
<text x="11.8" y="65" text-anchor="middle" font-family="Liberation Mono, monospace" font-weight="bold" font-size="13" fill="#c4c4c4">AP</text>
<path d="M21.5 73.5H5.5L1.5 77.5V91.5L5.5 95.5H21.5" fill="none" stroke="#9a9a9a" stroke-width="1"/>
<path d="M2.5 92.5L5.5 95.5H21.5" fill="none" stroke="#303030" stroke-width="1"/>
<text x="11.8" y="89" text-anchor="middle" font-family="Liberation Mono, monospace" font-weight="bold" font-size="13" fill="#c4c4c4">EP</text>
<path d="M21.5 97.5H5.5L1.5 101.5V115.5L5.5 119.5H21.5" fill="none" stroke="#9a9a9a" stroke-width="1"/>
<path d="M2.5 116.5L5.5 119.5H21.5" fill="none" stroke="#303030" stroke-width="1"/>
<text x="11.8" y="113" text-anchor="middle" font-family="Liberation Mono, monospace" font-weight="bold" font-size="13" fill="#c4c4c4">CD</text>
<path d="M21.5 121.5H5.5L1.5 125.5V139.5L5.5 143.5H21.5" fill="none" stroke="#9a9a9a" stroke-width="1"/>
<path d="M2.5 140.5L5.5 143.5H21.5" fill="none" stroke="#303030" stroke-width="1"/>
<text x="11.8" y="137" text-anchor="middle" font-family="Liberation Mono, monospace" font-weight="bold" font-size="13" fill="#c4c4c4">VV</text>
<path d="M21.5 145.5H5.5L1.5 149.5V163.5L5.5 167.5H21.5" fill="none" stroke="#9a9a9a" stroke-width="1"/>
<path d="M2.5 164.5L5.5 167.5H21.5" fill="none" stroke="#303030" stroke-width="1"/>
<text x="11.8" y="161" text-anchor="middle" font-family="Liberation Mono, monospace" font-weight="bold" font-size="13" fill="#c4c4c4">I</text>
<path d="M21.5 169.5H5.5L1.5 173.5V187.5L5.5 191.5H21.5" fill="none" stroke="#9a9a9a" stroke-width="1"/>
<path d="M2.5 188.5L5.5 191.5H21.5" fill="none" stroke="#303030" stroke-width="1"/>
<text x="11.8" y="185" text-anchor="middle" font-family="Liberation Mono, monospace" font-weight="bold" font-size="13" fill="#c4c4c4">P</text>
<path d="M21.5 193.5H5.5L1.5 197.5V211.5L5.5 215.5H21.5" fill="none" stroke="#9a9a9a" stroke-width="1"/>
<path d="M2.5 212.5L5.5 215.5H21.5" fill="none" stroke="#303030" stroke-width="1"/>
<text x="11.8" y="209" text-anchor="middle" font-family="Liberation Mono, monospace" font-weight="bold" font-size="13" fill="#c4c4c4">GD</text>
</svg>
<svg class="abs" style="left:531px;top:211px" width="461" height="181">
<rect x="0" y="0" width="461" height="181" fill="#8c8c8c"/><rect x="0" y="0" width="460" height="180" fill="#3a3a3a"/>
<rect x="1" y="1" width="459" height="179" fill="#000"/>
<path d="M11.5 1V180 M20.5 1V180 M27.5 1V180 M33.5 1V180 M39.5 1V180 M78.5 1V180 M100.5 1V180 M116.5 1V180 M128.5 1V180 M138.5 1V180 M147.5 1V180 M154.5 1V180 M161.5 1V180 M166.5 1V180 M205.5 1V180 M227.5 1V180 M243.5 1V180 M255.5 1V180 M265.5 1V180 M274.5 1V180 M281.5 1V180 M288.5 1V180 M294.5 1V180 M332.5 1V180 M354.5 1V180 M370.5 1V180 M383.5 1V180 M393.5 1V180 M401.5 1V180 M409.5 1V180 M415.5 1V180 M421.5 1V180 M1 10.5H460 M1 20.5H460 M1 30.5H460 M1 40.5H460 M1 50.5H460 M1 60.5H460 M1 70.5H460 M1 80.5H460 M1 90.5H460 M1 100.5H460 M1 110.5H460 M1 120.5H460 M1 130.5H460 M1 140.5H460 M1 150.5H460 M1 160.5H460 M1 170.5H460" stroke="#4e4e4e" stroke-width="1" fill="none" shape-rendering="crispEdges"/>
<clipPath id="cp"><rect x="1" y="1" width="459" height="179"/></clipPath><g clip-path="url(#cp)">
<polyline points="1.3,177.3 14.1,162.5 34.3,142.3 55.4,119.3 78.4,96.3 85.1,88.5 92.0,81.5 98.9,74.8 105.7,67.0 114.3,60.2 122.9,55.0 131.5,51.6 140.1,49.4 148.7,48.2 157.3,47.5 165.9,47.1 174.0,47.5 187.8,49.3 205.0,51.8 222.3,55.8 235.8,59.9 255.0,66.6" fill="none" stroke="#7a72e0" stroke-width="2.4" stroke-linejoin="round" stroke-linecap="round"/>
<polyline points="49.7,179.7 59.2,159.6 68.8,139.4 78.4,119.3 88.0,99.2 92.8,88.7 97.6,80.0 100.6,72.2 110.9,52.4 117.8,40.4 122.0,33.5 126.4,28.4 131.5,25.3 135.8,24.6 140.1,25.5 144.0,27.6 148.7,31.0 157.3,35.3 165.9,38.7 174.0,41.5 178.2,43.0 197.4,48.2 216.6,53.5 235.8,59.3 255.0,66.6 274.1,75.0 293.3,83.9 312.5,93.5 339.0,107.2 459.0,170.0" fill="none" stroke="#d21826" stroke-width="2.4" stroke-linejoin="round" stroke-linecap="round"/>
</g></svg>
<div class="ln" style="left:499px;top:216px;width:28px;text-align:right;color:#b8b8b8">dB</div>
<div class="ln" style="left:499px;top:236px;width:28px;text-align:right;color:#b8b8b8">6</div>
<div class="ln" style="left:499px;top:256px;width:28px;text-align:right;color:#b8b8b8">0</div>
<div class="ln" style="left:499px;top:276px;width:28px;text-align:right;color:#b8b8b8">-6</div>
<div class="ln" style="left:499px;top:296px;width:28px;text-align:right;color:#b8b8b8">-12</div>
<div class="ln" style="left:499px;top:316px;width:28px;text-align:right;color:#b8b8b8">-18</div>
<div class="ln" style="left:499px;top:336px;width:28px;text-align:right;color:#b8b8b8">-24</div>
<div class="ln" style="left:499px;top:356px;width:28px;text-align:right;color:#b8b8b8">-30</div>
<div class="ln" style="left:499px;top:376px;width:28px;text-align:right;color:#b8b8b8">-36</div>
<div class="ln" style="left:527.5px;top:396px;color:#c8c8c8;transform:scaleX(0.94)">5 Hz</div>
<div class="ln" style="left:565px;top:396px;color:#c8c8c8;transform:scaleX(0.94)">10</div>
<div class="ln" style="left:654px;top:396px;color:#c8c8c8;transform:scaleX(0.94)">50</div>
<div class="ln" style="left:688.5px;top:396px;color:#c8c8c8;transform:scaleX(0.94)">100</div>
<div class="ln" style="left:778px;top:396px;color:#c8c8c8;transform:scaleX(0.94)">500</div>
<div class="ln" style="left:818px;top:396px;color:#c8c8c8;transform:scaleX(0.94)">1 K</div>
<div class="ln" style="left:907.5px;top:396px;color:#c8c8c8;transform:scaleX(0.94)">5 K</div>
<div class="ln" style="left:943px;top:396px;color:#c8c8c8;transform:scaleX(0.94)">10 K</div>
<div class="ln" style="left:971.7px;top:396px;color:#c8c8c8;transform:scaleX(0.94)">20 K</div>
</div></body></html>
